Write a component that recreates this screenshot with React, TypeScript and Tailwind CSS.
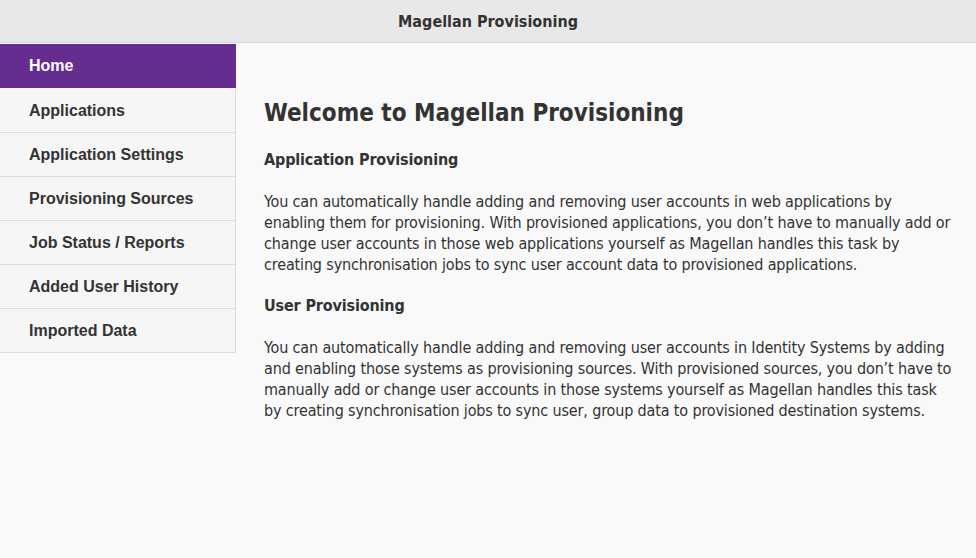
import React from 'react';

const NAV_ITEMS = [
  'Home',
  'Applications',
  'Application Settings',
  'Provisioning Sources',
  'Job Status / Reports',
  'Added User History',
  'Imported Data',
];

const tahoma = "font-['DejaVu_Sans_Condensed','DejaVu_Sans',sans-serif]";

export default function App() {
  return (
    <div className="flex h-[558px] w-full flex-col bg-[#f9f9f9] text-[#333]">
      {/* top bar */}
      <header
        className={`flex h-[43px] shrink-0 items-center justify-center border-b border-[#d6d6d6] bg-[#e8e8e8] pt-px text-[16px] font-bold ${tahoma}`}
      >
        Magellan Provisioning
      </header>

      <div className="flex flex-1">
        {/* sidebar */}
        <nav className="mt-px w-[236px] shrink-0 self-start font-['Liberation_Sans',Arial,sans-serif]">
          {NAV_ITEMS.map((item, idx) => (
            <div
              key={item}
              className={
                idx === 0
                  ? 'flex h-[45px] items-center border-b border-[#f6f6f6] bg-[#662d91] pl-[29px] text-[16px] font-bold text-white'
                  : 'flex h-[44px] items-center border-r border-b border-[#dcdcdc] bg-[#f6f6f6] pl-[29px] text-[16px] font-bold text-[#333]'
              }
            >
              {item}
            </div>
          ))}
        </nav>

        {/* main content */}
        <main className={`flex-1 pt-[55px] pl-[28px] pr-[6px] tracking-[-0.15px] ${tahoma}`}>
          <h1 className="text-[24px] leading-[30px] font-bold tracking-normal">Welcome to Magellan Provisioning</h1>

          <h2 className="mt-[22px] text-[16px] leading-[20px] font-bold">Application Provisioning</h2>
          <p className="mt-[21px] text-[16px] leading-[21px]">
            You can automatically handle adding and removing user accounts in web applications by
            <br />
            enabling them for provisioning. With provisioned applications, you don’t have to manually add or
            <br />
            change user accounts in those web applications yourself as Magellan handles this task by
            <br />
            creating synchronisation jobs to sync user account data to provisioned applications.
          </p>

          <h2 className="mt-[21px] text-[16px] leading-[20px] font-bold">User Provisioning</h2>
          <p className="mt-[21px] text-[16px] leading-[21px]">
            You can automatically handle adding and removing user accounts in Identity Systems by adding
            <br />
            and enabling those systems as provisioning sources. With provisioned sources, you don’t have to
            <br />
            manually add or change user accounts in those systems yourself as Magellan handles this task
            <br />
            by creating synchronisation jobs to sync user, group data to provisioned destination systems.
          </p>
        </main>
      </div>
    </div>
  );
}
